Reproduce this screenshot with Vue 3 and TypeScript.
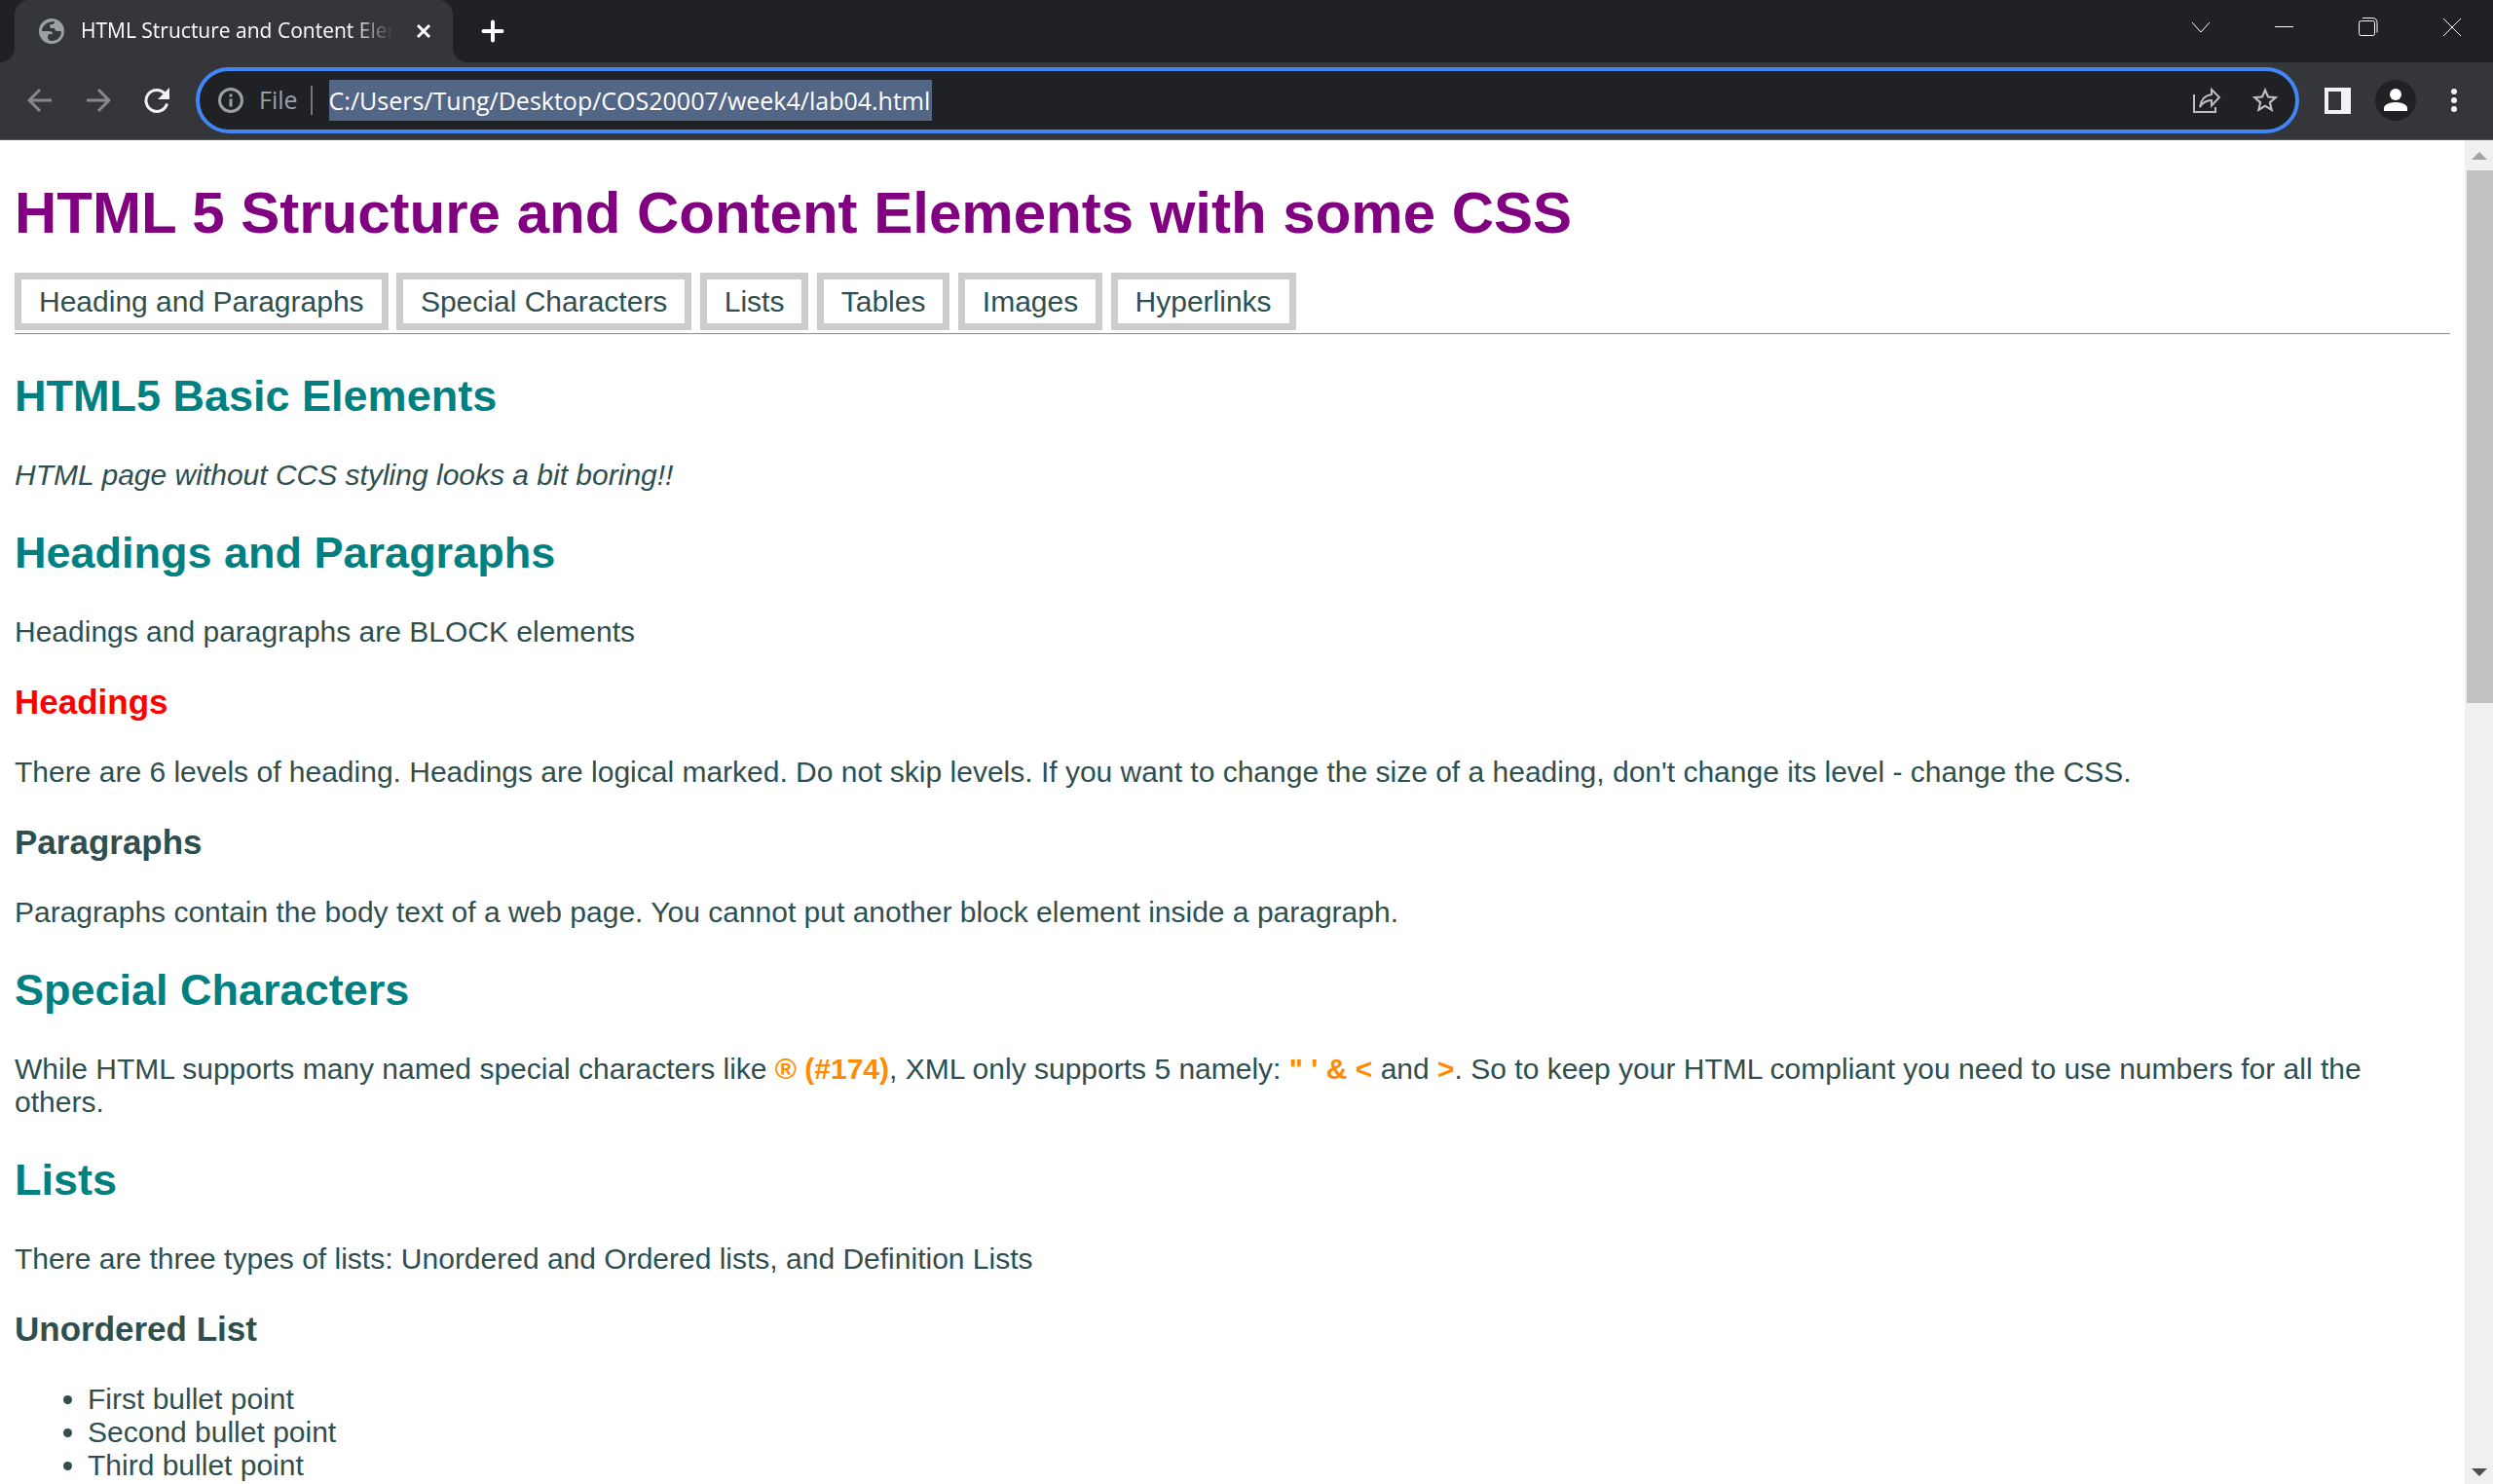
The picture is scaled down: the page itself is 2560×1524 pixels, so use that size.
<script setup lang="ts">
import { ref } from 'vue'

const address = ref('C:/Users/Tung/Desktop/COS20007/week4/lab04.html')
const links: { label: string; target: string }[] = [
  { label: 'Heading and Paragraphs', target: '#headings' },
  { label: 'Special Characters', target: '#special' },
  { label: 'Lists', target: '#lists' },
  { label: 'Tables', target: '#tables' },
  { label: 'Images', target: '#images' },
  { label: 'Hyperlinks', target: '#hyperlinks' },
]
const bullets: string[] = ['First bullet point', 'Second bullet point', 'Third bullet point']
</script>

<template>
  <div class="browser">
    <header class="strip">
      <div class="tab">
        <svg class="favicon" width="26" height="26" viewBox="0 0 26 26">
          <circle cx="13" cy="13" r="13" fill="#9aa0a6" />
          <path d="M16 3C9 3 3 7 3 13h7c3 0 4 1 4 3h-3c-1 0-2 1-2 3s1 4 4 4c6 0 10-4 10-10h-4c-2 0-3-1-3-3h-3c-1 0-2-1-2-2 0-2 1-2 3-2 1 0 2-1 2-3z" fill="#35363a" />
        </svg>
        <span class="tab-title">HTML Structure and Content Elements</span>
        <button class="tab-close" aria-label="Close tab">
          <svg width="16" height="16" viewBox="0 0 16 16"><path d="M2 2l12 12M14 2L2 14" stroke="#fff" stroke-width="3" /></svg>
        </button>
      </div>
      <button class="new-tab" aria-label="New tab">
        <svg width="24" height="24" viewBox="0 0 24 24"><path d="M12 2.500v19M2.500 12h19" stroke="#fff" stroke-width="4" stroke-linecap="round" /></svg>
      </button>
      <div class="controls">
        <button aria-label="Search tabs">
          <svg width="20" height="20" viewBox="0 0 20 20"><path d="M2 5l9 10 9-10" /></svg>
        </button>
        <button aria-label="Minimize">
          <svg width="20" height="20" viewBox="0 0 20 20"><path d="M1 9.500h19" /></svg>
        </button>
        <button aria-label="Restore">
          <svg width="22" height="20" viewBox="0 0 22 20"><rect x="2.500" y="3.500" width="16" height="15" rx="2" /><path d="M6 .5h10q5 0 5 5v10" /></svg>
        </button>
        <button aria-label="Close">
          <svg width="22" height="20" viewBox="0 0 22 20"><path d="M3 1l18 18M21 1L3 19" /></svg>
        </button>
      </div>
    </header>

    <div class="toolbar">
      <button class="tool" aria-label="Back">
        <svg width="26" height="26" viewBox="0 0 26 26"><path d="M25 13H3M13 2L2 13l11 11" fill="none" stroke="#87888b" stroke-width="3" /></svg>
      </button>
      <button class="tool" aria-label="Forward">
        <svg width="26" height="26" viewBox="0 0 26 26"><path d="M1 13h22M13 2l11 11-11 11" fill="none" stroke="#87888b" stroke-width="3" /></svg>
      </button>
      <button class="tool" aria-label="Reload">
        <svg width="28" height="28" viewBox="0 0 28 28">
          <path d="M22.500 7.500A11 11 0 1 0 24.500 17.500" fill="none" stroke="#f1f3f4" stroke-width="3" />
          <path d="M27 1v12H15z" fill="#f1f3f4" />
        </svg>
      </button>
      <div class="omnibox">
        <svg width="26" height="26" viewBox="0 0 26 26">
          <circle cx="13" cy="13" r="11.500" fill="none" stroke="#9aa0a6" stroke-width="3" />
          <path d="M13 11.500v8M13 6.500v3" stroke="#9aa0a6" stroke-width="3" />
        </svg>
        <label class="scheme" for="address">File</label>
        <span class="divider"></span>
        <input id="address" v-model="address" class="address" type="text" spellcheck="false" />
        <div class="omni-actions">
          <button class="tool" aria-label="Share">
            <svg width="30" height="28" viewBox="0 0 30 28" fill="none" stroke="#bdbebf" stroke-width="2">
              <path d="M2 8v18h22v-5" />
              <path d="M8 21C9 13 13 9 20 8V3l8 8-8 8.500V14C14 14 11 16 8 21z" />
            </svg>
          </button>
          <button class="tool" aria-label="Bookmark">
            <svg width="32" height="32" viewBox="0 0 24 24" fill="#bdbebf">
              <path d="M22 9.240l-7.190-.620L12 2 9.190 8.630 2 9.240l5.460 4.730L5.820 21 12 17.270 18.180 21l-1.630-7.030L22 9.240zM12 15.400l-3.760 2.270 1-4.280-3.320-2.880 4.380-.380L12 6.100l1.710 4.040 4.380.380-3.320 2.880 1 4.280L12 15.400z" />
            </svg>
          </button>
        </div>
      </div>
      <button class="tool" aria-label="Side panel">
        <svg width="27" height="27" viewBox="0 0 27 27"><path d="M0 0h27v27H0zM4 4v19h13V4z" fill="#f1f3f4" fill-rule="evenodd" /></svg>
      </button>
      <button class="tool" aria-label="Profile">
        <svg width="42" height="42" viewBox="0 0 42 42">
          <circle cx="21" cy="21" r="21" fill="#202124" />
          <circle cx="21" cy="15" r="6" fill="#fff" />
          <path d="M9 32v-3c0-4 7-6 12-6s12 2 12 6v3z" fill="#fff" />
        </svg>
      </button>
      <button class="tool" aria-label="Menu">
        <svg width="8" height="26" viewBox="0 0 8 26" fill="#f1f3f4"><circle cx="4" cy="4" r="3" /><circle cx="4" cy="13" r="3" /><circle cx="4" cy="22" r="3" /></svg>
      </button>
    </div>

    <div class="viewport">
      <main class="page">
        <h1>HTML 5 Structure and Content Elements with some CSS</h1>
        <nav>
          <template v-for="link in links" :key="link.target"><a :href="link.target">{{ link.label }}</a>{{ ' ' }}</template>
        </nav>
        <hr />
        <h2>HTML5 Basic Elements</h2>
        <p><em>HTML page without CCS styling looks a bit boring!!</em></p>
        <h2 id="headings">Headings and Paragraphs</h2>
        <p>Headings and paragraphs are BLOCK elements</p>
        <h3 class="alert">Headings</h3>
        <p>There are 6 levels of heading. Headings are logical marked. Do not skip levels. If you want to change the size of a heading, don't change its level - change the CSS.</p>
        <h3>Paragraphs</h3>
        <p>Paragraphs contain the body text of a web page. You cannot put another block element inside a paragraph.</p>
        <h2 id="special">Special Characters</h2>
        <p>While HTML supports many named special characters like <strong>® (#174)</strong>, XML only supports 5 namely: <strong>" ' &amp; &lt;</strong> and <strong>&gt;</strong>. So to keep your HTML compliant you need to use numbers for all the others.</p>
        <h2 id="lists">Lists</h2>
        <p>There are three types of lists: Unordered and Ordered lists, and Definition Lists</p>
        <h3>Unordered List</h3>
        <ul>
          <li v-for="bullet in bullets" :key="bullet">{{ bullet }}</li>
        </ul>
      </main>
      <div class="scrollbar">
        <svg width="29" height="31" viewBox="0 0 29 31"><path d="M7 20h16l-8-8z" fill="#a3a3a3" /></svg>
        <div class="thumb"></div>
        <div class="rest"></div>
        <svg width="29" height="31" viewBox="0 0 29 31"><path d="M7 15h16l-8 8z" fill="#505050" /></svg>
      </div>
    </div>
  </div>
</template>

<style>
body {
  margin: 0;
  background: #fff;
}
</style>

<style scoped>
.browser {
  display: flex;
  flex-direction: column;
  height: 100vh;
  overflow: hidden;
  font-family: "Open Sans", "Noto Sans", sans-serif;
}
button {
  display: flex;
  align-items: center;
  justify-content: center;
  padding: 0;
  border: 0;
  background: none;
}
svg {
  flex: none;
  display: block;
}
.strip {
  flex: none;
  display: flex;
  height: 64px;
  padding-left: 15px;
  background: #202124;
}
.tab {
  position: relative;
  box-sizing: border-box;
  display: flex;
  align-items: center;
  width: 450px;
  padding: 0 22px 0 25px;
  border-radius: 15px 15px 0 0;
  background: #35363a;
}
.tab::before,
.tab::after {
  content: "";
  position: absolute;
  bottom: 0;
  width: 15px;
  height: 15px;
}
.tab::before {
  right: 100%;
  background: radial-gradient(circle at 0 0, transparent 15px, #35363a 15px);
}
.tab::after {
  left: 100%;
  background: radial-gradient(circle at 100% 0, transparent 15px, #35363a 15px);
}
.tab-title {
  flex: 1;
  min-width: 0;
  margin: 0 23px 0 17px;
  overflow: hidden;
  white-space: nowrap;
  font-size: 21px;
  line-height: 28px;
  color: #fff;
  mask-image: linear-gradient(to right, #000 86%, transparent);
}
.tab-title,
.scheme {
  padding-bottom: 2px;
}
.new-tab {
  width: 40px;
  margin-left: 21px;
}
.controls {
  display: flex;
  height: 55px;
  margin-left: auto;
}
.controls button {
  width: 86px;
}
.controls svg {
  fill: none;
  stroke: #fff;
  stroke-width: 1;
}
.toolbar {
  flex: none;
  display: flex;
  align-items: center;
  padding: 5px 10px 6px 11px;
  border-bottom: 1px solid #55565a;
  background: #35363a;
}
.tool {
  flex: none;
  width: 60px;
  height: 60px;
}
.omnibox {
  flex: 1;
  box-sizing: border-box;
  display: flex;
  align-items: center;
  height: 68px;
  margin: 0 9px 0 10px;
  padding: 0 1px 0 19px;
  border: 4px solid #4285f4;
  border-radius: 34px;
  background: #202124;
}
.scheme {
  margin-left: 16px;
  font-size: 25px;
  line-height: 30px;
  color: #9aa0a6;
}
.divider {
  width: 2px;
  height: 30px;
  margin: 0 17px 0 13px;
  background: #76787b;
}
.address {
  box-sizing: border-box;
  width: 619px;
  height: 42px;
  padding: 0 0 1px;
  border: 0;
  outline: 0;
  background: #546686;
  color: #fff;
  font-family: inherit;
  font-size: 25px;
}
.omni-actions {
  display: flex;
  margin-left: auto;
}
.viewport {
  flex: 1;
  min-height: 0;
  display: flex;
}
.page {
  flex: 1;
  padding: 0 15px;
  overflow: hidden;
  font-family: "Liberation Sans", Arial, sans-serif;
  font-size: 30px;
  line-height: 34px;
  color: darkslategray;
}
h1 {
  margin: 40px 0;
  font-size: 60px;
  line-height: 69px;
  color: purple;
}
nav a {
  padding: 6px 18px;
  border: 7px solid #ccc;
  color: inherit;
  text-decoration: none;
}
hr {
  height: 0;
  margin: 15px 0 0;
  border: 0;
  border-top: 1px solid #9a9a9a;
  border-bottom: 1px solid #eee;
}
h2 {
  margin: 37px 0 38px;
  font-size: 45px;
  line-height: 52px;
  color: teal;
}
h3 {
  margin: 35px 0;
  font-size: 35px;
  line-height: 40px;
}
p {
  margin: 0;
}
.alert {
  color: red;
}
strong {
  color: darkorange;
}
ul {
  margin: 0;
  padding-left: 75px;
}
.scrollbar {
  flex: none;
  display: flex;
  flex-direction: column;
  width: 29px;
  background: #f0f0f0;
}
.thumb {
  flex: 83 0 0;
  margin-left: 2px;
  background: #c1c1c1;
}
.rest {
  flex: 117 0 0;
}
</style>
